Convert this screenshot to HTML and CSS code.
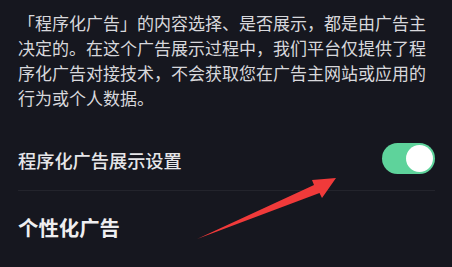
FILE: index.html
```html
<!DOCTYPE html>
<html lang="zh-CN">
<head>
<meta charset="utf-8">
<link rel="stylesheet" href="styles.css">
</head>
<body>
<div class="page">
  <p class="desc">「程序化广告」的内容选择、是否展示，都是由广告主决定的。在这个广告展示过程中，我们平台仅提供了程序化广告对接技术，不会获取您在广告主网站或应用的行为或个人数据。</p>
  <div class="row">
    <span class="row-label">程序化广告展示设置</span>
    <span class="switch"><span class="knob"></span></span>
  </div>
  <h2 class="section-title">个性化广告</h2>
  <svg class="arrow" width="452" height="267" viewBox="0 0 452 267">
    <polygon points="197,239 314,185 312,180 336,178 322,198 319.5,193" fill="#f03a3a"/>
  </svg>
</div>
</body>
</html>
```
FILE: styles.css
```css
html, body {
  margin: 0;
  padding: 0;
  background: #16171f;
}
.page {
  position: relative;
  width: 452px;
  height: 267px;
  overflow: hidden;
  font-family: "Noto Sans CJK SC", "Noto Sans", sans-serif;
}
.desc {
  margin: 0;
  padding: 10px 16px 0 18px;
  font-size: 17px;
  line-height: 25px;
  color: #d8d8dc;
  font-weight: 400;
}
.row {
  margin: 16px 17px 0 18px;
  height: 64px;
  display: flex;
  align-items: center;
  justify-content: space-between;
  border-bottom: 1px solid #23242c;
}
.row-label {
  font-size: 18.2px;
  font-weight: 500;
  color: #e6e6e9;
  line-height: 24px;
  padding-top: 3px;
}
.switch {
  width: 53px;
  height: 31px;
  border-radius: 16px;
  background: #5ed39b;
  display: flex;
  align-items: center;
  justify-content: flex-end;
  padding: 0 2px;
  box-sizing: border-box;
}
.knob {
  width: 27px;
  height: 27px;
  border-radius: 50%;
  background: #ffffff;
}
.section-title {
  margin: 22px 0 0 18px;
  font-size: 20.4px;
  line-height: 28px;
  font-weight: 700;
  color: #eeeef0;
}
.arrow {
  position: absolute;
  left: 0;
  top: 0;
}
```
